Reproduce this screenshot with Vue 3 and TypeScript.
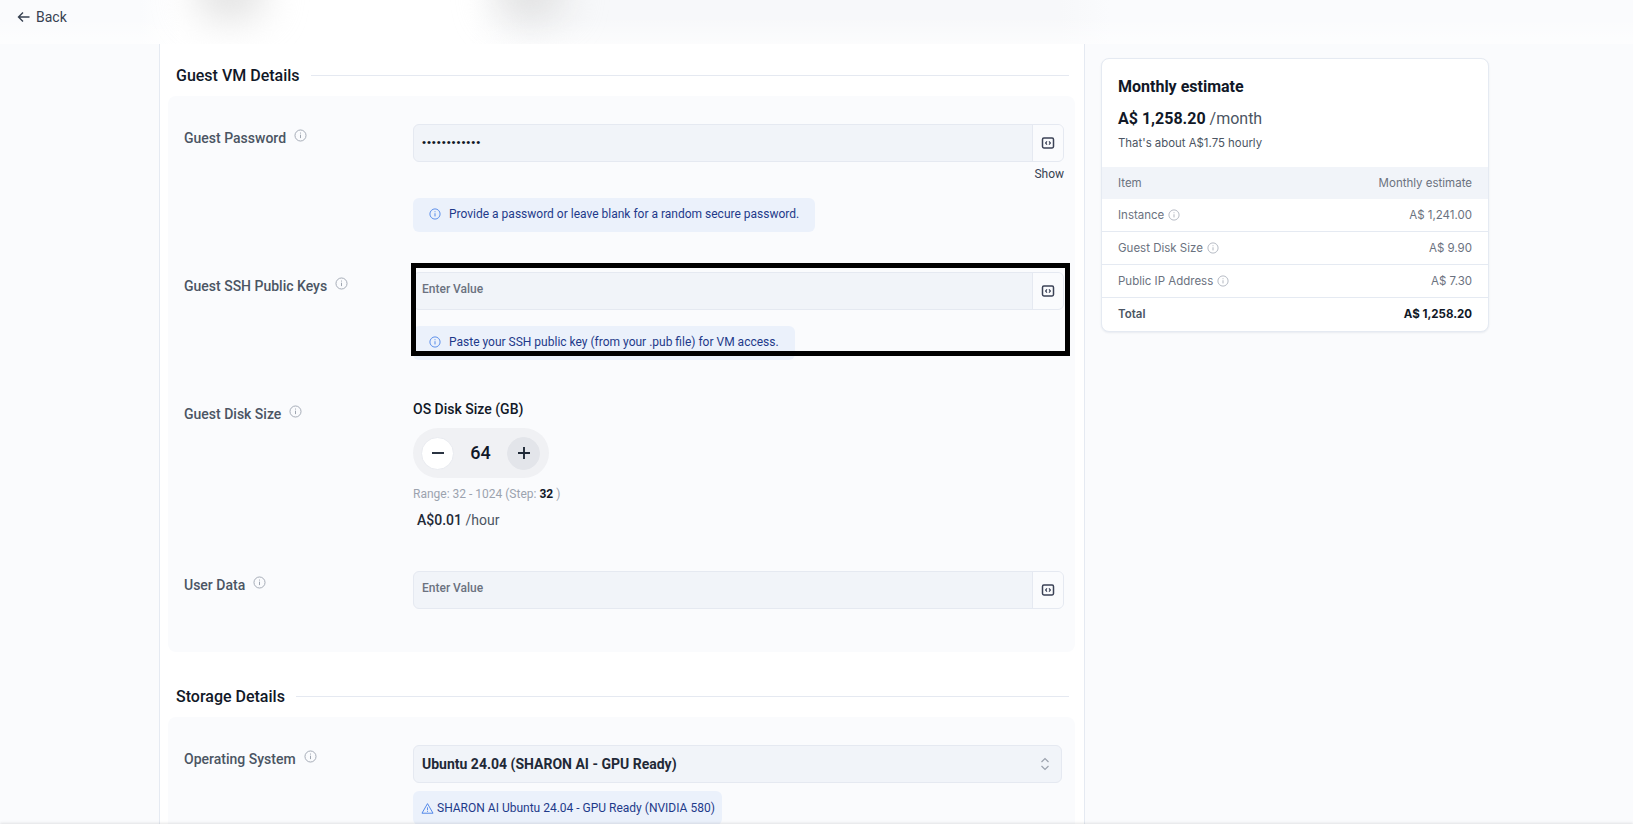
<script setup lang="ts">
const rows = [
  { label: "Instance", amount: "A$ 1,241.00" },
  { label: "Guest Disk Size", amount: "A$ 9.90" },
  { label: "Public IP Address", amount: "A$ 7.30" },
];
</script>

<template>
  <div class="page">
    <header class="topbar">
      <span class="blob blob-a"></span>
      <span class="blob blob-b"></span>
      <a class="back">
        <svg class="back-arrow" viewBox="0 0 16 16" width="16" height="16">
          <path d="M13.5 8H2.8M7 3.5 2.5 8 7 12.5" fill="none" stroke="currentColor" stroke-width="1.4" />
        </svg>
        Back
      </a>
    </header>

    <main class="main">
      <section class="panel">
        <div class="heading">
          <h2>Guest VM Details</h2>
          <span class="rule"></span>
        </div>
        <div class="group group-guest">
          <div class="row row-password">
            <div class="label">
              Guest Password
              <svg class="info-icon" viewBox="0 0 16 16" width="13" height="13">
                <circle cx="8" cy="8" r="6.8" fill="none" stroke="currentColor" stroke-width="1.1" />
                <path d="M8 7v4.2M8 4.4v1.2" stroke="currentColor" stroke-width="1.2" />
              </svg>
            </div>
            <div class="field">
              <div class="input">
                <span class="dots">••••••••••••</span>
                <span class="addon">
                  <svg viewBox="0 0 14 14" width="14" height="14">
                    <rect x="1.5" y="2" width="11" height="10" rx="1.4" fill="none" stroke="#3b4256" stroke-width="1.5" />
                    <path d="M6 5.4 4.6 7 6 8.6M8 5.4 9.4 7 8 8.6" fill="none" stroke="#3b4256" stroke-width="1.2" />
                  </svg>
                </span>
              </div>
              <div class="show">Show</div>
              <div class="note note-first">
                <svg class="note-icon" viewBox="0 0 16 16" width="12" height="12">
                  <circle cx="8" cy="8" r="6.8" fill="none" stroke="currentColor" stroke-width="1.2" />
                  <path d="M8 7v4.2M8 4.4v1.2" stroke="currentColor" stroke-width="1.3" />
                </svg>
                Provide a password or leave blank for a random secure password.
              </div>
            </div>
          </div>

          <div class="row row-ssh">
            <div class="label">
              Guest SSH Public Keys
              <svg class="info-icon" viewBox="0 0 16 16" width="13" height="13">
                <circle cx="8" cy="8" r="6.8" fill="none" stroke="currentColor" stroke-width="1.1" />
                <path d="M8 7v4.2M8 4.4v1.2" stroke="currentColor" stroke-width="1.2" />
              </svg>
            </div>
            <div class="field">
              <div class="input">
                <span class="placeholder">Enter Value</span>
                <span class="addon">
                  <svg viewBox="0 0 14 14" width="14" height="14">
                    <rect x="1.5" y="2" width="11" height="10" rx="1.4" fill="none" stroke="#3b4256" stroke-width="1.5" />
                    <path d="M6 5.4 4.6 7 6 8.6M8 5.4 9.4 7 8 8.6" fill="none" stroke="#3b4256" stroke-width="1.2" />
                  </svg>
                </span>
              </div>
              <div class="note note-ssh">
                <svg class="note-icon" viewBox="0 0 16 16" width="12" height="12">
                  <circle cx="8" cy="8" r="6.8" fill="none" stroke="currentColor" stroke-width="1.2" />
                  <path d="M8 7v4.2M8 4.4v1.2" stroke="currentColor" stroke-width="1.3" />
                </svg>
                Paste your SSH public key (from your .pub file) for VM access.
              </div>
              <div class="highlight"></div>
            </div>
          </div>

          <div class="row row-disk">
            <div class="label">
              Guest Disk Size
              <svg class="info-icon" viewBox="0 0 16 16" width="13" height="13">
                <circle cx="8" cy="8" r="6.8" fill="none" stroke="currentColor" stroke-width="1.1" />
                <path d="M8 7v4.2M8 4.4v1.2" stroke="currentColor" stroke-width="1.2" />
              </svg>
            </div>
            <div class="field">
              <div class="disk-title">OS Disk Size (GB)</div>
              <div class="stepper">
                <button class="step step-minus">
                  <svg viewBox="0 0 14 14" width="14" height="14"><path d="M1 7h12" stroke="currentColor" stroke-width="1.9" /></svg>
                </button>
                <span class="step-value">64</span>
                <button class="step step-plus">
                  <svg viewBox="0 0 14 14" width="14" height="14"><path d="M1 7h12M7 1v12" stroke="currentColor" stroke-width="1.9" /></svg>
                </button>
              </div>
              <div class="range">Range: 32 - 1024 (Step: <b>32</b> )</div>
              <div class="hour"><b>A$0.01</b> /hour</div>
            </div>
          </div>

          <div class="row row-user">
            <div class="label">
              User Data
              <svg class="info-icon" viewBox="0 0 16 16" width="13" height="13">
                <circle cx="8" cy="8" r="6.8" fill="none" stroke="currentColor" stroke-width="1.1" />
                <path d="M8 7v4.2M8 4.4v1.2" stroke="currentColor" stroke-width="1.2" />
              </svg>
            </div>
            <div class="field">
              <div class="input">
                <span class="placeholder">Enter Value</span>
                <span class="addon">
                  <svg viewBox="0 0 14 14" width="14" height="14">
                    <rect x="1.5" y="2" width="11" height="10" rx="1.4" fill="none" stroke="#3b4256" stroke-width="1.5" />
                    <path d="M6 5.4 4.6 7 6 8.6M8 5.4 9.4 7 8 8.6" fill="none" stroke="#3b4256" stroke-width="1.2" />
                  </svg>
                </span>
              </div>
            </div>
          </div>
        </div>

        <div class="heading heading-storage">
          <h2>Storage Details</h2>
          <span class="rule"></span>
        </div>
        <div class="group group-storage">
          <div class="row">
            <div class="label">
              Operating System
              <svg class="info-icon" viewBox="0 0 16 16" width="13" height="13">
                <circle cx="8" cy="8" r="6.8" fill="none" stroke="currentColor" stroke-width="1.1" />
                <path d="M8 7v4.2M8 4.4v1.2" stroke="currentColor" stroke-width="1.2" />
              </svg>
            </div>
            <div class="field field-os">
              <div class="select">
                <span>Ubuntu 24.04 (SHARON AI - GPU Ready)</span>
                <svg viewBox="0 0 12 16" width="12" height="16">
                  <path d="M2.5 6 6 2.5 9.5 6M2.5 10 6 13.5 9.5 10" fill="none" stroke="#9ca3af" stroke-width="1.2" />
                </svg>
              </div>
              <div class="note note-warn">
                <svg class="note-icon warn-icon" viewBox="0 0 16 16" width="13" height="13">
                  <path d="M8 2 14.8 13.8H1.2Z" fill="none" stroke="currentColor" stroke-width="1.2" stroke-linejoin="round" />
                  <path d="M8 6.5v3.7M8 11.2v1.1" stroke="currentColor" stroke-width="1.1" />
                </svg>
                SHARON AI Ubuntu 24.04 - GPU Ready (NVIDIA 580)
              </div>
            </div>
          </div>
        </div>
      </section>

      <aside class="side">
        <div class="card">
          <div class="card-head">
            <h3>Monthly estimate</h3>
            <div class="price"><b>A$ 1,258.20</b> <span>/month</span></div>
            <div class="hourly">That's about A$1.75 hourly</div>
          </div>
          <div class="line line-head">
            <span>Item</span>
            <span>Monthly estimate</span>
          </div>
          <div v-for="r in rows" :key="r.label" class="line">
            <span class="line-label">
              {{ r.label }}
              <svg viewBox="0 0 16 16" width="12" height="12">
                <circle cx="8" cy="8" r="6.8" fill="none" stroke="currentColor" stroke-width="1.1" />
                <path d="M8 7v4.2M8 4.4v1.2" stroke="currentColor" stroke-width="1.2" />
              </svg>
            </span>
            <span>{{ r.amount }}</span>
          </div>
          <div class="line line-total">
            <span>Total</span>
            <span class="total-amount">A$ 1,258.20</span>
          </div>
        </div>
      </aside>
    </main>
    <footer class="footer"></footer>
  </div>
</template>

<style scoped>
.page {
  height: 829px;
  overflow: hidden;
  display: flex;
  flex-direction: column;
  background: #fafbfd;
  font-family: Inter, "Liberation Sans", sans-serif;
  color: #111827;
}

.topbar {
  position: relative;
  height: 44px;
  flex: none;
  overflow: hidden;
  display: flex;
  align-items: flex-start;
  padding: 9px 0 0 16px;
  box-sizing: border-box;
  background:
    linear-gradient(180deg, rgba(255, 255, 255, 0) 40%, rgba(255, 255, 255, 0.6) 100%),
    linear-gradient(90deg, #fafbfd 0, #fafbfd 140px, #fff 180px, #fff 470px, #f7f8fa 530px, #f7f8fa 1060px, #fafbfd 1110px);
}

.blob {
  position: absolute;
  top: -30px;
  height: 48px;
  border-radius: 50%;
  background: #dcdcdc;
  filter: blur(20px);
}

.blob-a {
  left: 195px;
  width: 70px;
}

.blob-b {
  left: 495px;
  width: 70px;
}

.back {
  position: relative;
  display: flex;
  align-items: center;
  gap: 4px;
  font-family: Roboto, sans-serif;
  font-size: 14px;
  line-height: 16px;
  color: #374151;
}

.main {
  flex: 1;
  min-height: 0;
  display: flex;
  align-items: flex-start;
  padding-left: 159px;
}

.panel {
  width: 926px;
  height: 780px;
  overflow: hidden;
  flex: none;
  box-sizing: border-box;
  background: #fff;
  border-left: 1px solid #e5eaf2;
  border-right: 1px solid #e5eaf2;
  padding: 0 9px 0 8px;
}

.heading {
  display: flex;
  align-items: center;
  gap: 11px;
  height: 24px;
  margin: 19px 0 9px;
  padding-left: 8px;
  padding-right: 6px;
}

.heading h2 {
  margin: 0;
  font-family: Roboto, sans-serif;
  font-size: 16px;
  font-weight: 500;
  color: #111827;
  white-space: nowrap;
}

.rule {
  flex: 1;
  height: 1px;
  background: #e5e9f1;
}

.heading-storage {
  margin-top: 32px;
}

.group {
  background: #fafbfd;
  border-radius: 8px;
  padding: 0 11px 0 16px;
}

.group-guest {
  height: 556px;
}

.group-storage {
  height: 200px;
  padding-top: 28px;
}

.row {
  display: flex;
}

.row-password {
  padding-top: 28px;
}

.row-ssh {
  padding-top: 40px;
}

.row-disk {
  padding-top: 40px;
}

.row-user {
  padding-top: 42px;
}

.label {
  width: 229px;
  flex: none;
  display: flex;
  align-items: flex-start;
  gap: 8px;
  padding-top: 5px;
  font-family: Roboto, sans-serif;
  font-size: 14px;
  line-height: 18px;
  font-weight: 500;
  color: #4b5563;
  white-space: nowrap;
}

.info-icon {
  color: #9ca3af;
}

.field {
  position: relative;
  flex: 1;
  min-width: 0;
}

.input {
  display: flex;
  height: 38px;
  box-sizing: border-box;
  border: 1px solid #e5e9f1;
  border-radius: 6px;
  background: #f1f4f9;
  align-items: center;
  overflow: hidden;
}

.dots {
  flex: 1;
  padding: 0 0 2px 8px;
  font-family: "Liberation Sans", sans-serif;
  font-size: 11.5px;
  letter-spacing: 0.9px;
  color: #111827;
}

.placeholder {
  flex: 1;
  padding: 0 0 4px 8px;
  font-family: Roboto, sans-serif;
  font-size: 12px;
  font-weight: 500;
  color: #6b7280;
}

.addon {
  width: 30px;
  height: 100%;
  flex: none;
  display: flex;
  align-items: center;
  justify-content: center;
  background: #fafbfd;
  border-left: 1px solid #e5e9f1;
}

.show {
  margin-top: 4px;
  text-align: right;
  font-family: Roboto, sans-serif;
  font-size: 12px;
  line-height: 16px;
  color: #374151;
}

.note {
  display: flex;
  align-items: center;
  width: fit-content;
  height: 34px;
  box-sizing: border-box;
  padding: 0 16px 2px;
  gap: 8px;
  background: #ebf1fb;
  border-radius: 6px;
  font-family: Roboto, sans-serif;
  font-size: 12px;
  color: #1e3a8a;
  white-space: nowrap;
}

.note-icon {
  color: #4f86e8;
  flex: none;
}

.note-first {
  margin-top: 16px;
}

.note-ssh {
  margin-top: 16px;
}

.highlight {
  position: absolute;
  left: -2px;
  top: -9px;
  right: -6px;
  height: 93px;
  box-sizing: border-box;
  border: 5px solid #000;
}

.disk-title {
  font-family: Roboto, sans-serif;
  font-size: 14px;
  font-weight: 500;
  line-height: 18px;
  color: #111827;
}

.stepper {
  margin-top: 10px;
  display: flex;
  align-items: center;
  justify-content: space-between;
  width: 136px;
  height: 50px;
  box-sizing: border-box;
  padding: 0 9px 0 8px;
  border-radius: 25px;
  background: #f0f1f4;
}

.step {
  width: 33px;
  height: 33px;
  padding: 0;
  display: flex;
  align-items: center;
  justify-content: center;
  border: 1px solid #e9ebf0;
  border-radius: 50%;
  background: #fff;
  color: #1f2937;
}

.step-plus {
  background: #e3e5ea;
  border-color: #e3e5ea;
}

.step-value {
  padding-bottom: 2px;
  font-family: Roboto, sans-serif;
  font-size: 18px;
  font-weight: 500;
  color: #111827;
}

.range {
  margin-top: 8px;
  font-family: Roboto, sans-serif;
  font-size: 12px;
  line-height: 16px;
  color: #9ca3af;
}

.range b {
  color: #111827;
}

.hour {
  margin-top: 9px;
  padding-left: 4px;
  font-family: Roboto, sans-serif;
  font-size: 14px;
  line-height: 18px;
  color: #4b5563;
}

.hour b {
  font-weight: 500;
  color: #1f2937;
}

.field-os {
  padding-right: 2px;
}

.select {
  display: flex;
  align-items: center;
  justify-content: space-between;
  height: 38px;
  box-sizing: border-box;
  padding: 0 10px 0 8px;
  border: 1px solid #e5e9f1;
  border-radius: 6px;
  background: #f1f4f9;
  font-family: Roboto, sans-serif;
  font-size: 14px;
  font-weight: 700;
  color: #1f2937;
}

.note-warn {
  margin-top: 8px;
  padding: 0 7px 0 8px;
  gap: 3px;
}

.side {
  padding: 14px 0 0 16px;
}

.card {
  width: 388px;
  box-sizing: border-box;
  background: #fff;
  border: 1px solid #e5eaf2;
  border-radius: 8px;
  overflow: hidden;
  box-shadow: 0 1px 2px rgba(30, 50, 90, 0.08);
}

.card-head {
  padding: 18px 16px 0;
  height: 108px;
  box-sizing: border-box;
}

.card-head h3 {
  margin: 0;
  font-family: Roboto, sans-serif;
  font-size: 16px;
  line-height: 20px;
  font-weight: 700;
  color: #111827;
}

.price {
  margin-top: 11px;
  font-family: Roboto, sans-serif;
  font-size: 16px;
  line-height: 22px;
  color: #4b5563;
}

.price b {
  color: #111827;
}

.hourly {
  margin-top: 5px;
  font-size: 11.4px;
  line-height: 16px;
  color: #4b5563;
}

.line {
  display: flex;
  justify-content: space-between;
  align-items: center;
  height: 33px;
  box-sizing: border-box;
  padding: 0 16px 1px;
  border-bottom: 1px solid #e5eaf2;
  font-size: 11.5px;
  color: #6b7280;
}

.line-head {
  height: 32px;
  background: #f1f4f9;
  border-bottom: none;
}

.line-label {
  display: flex;
  align-items: center;
  gap: 4px;
}

.line-label svg {
  color: #a8aeb8;
}

.line-total {
  border-bottom: none;
  font-weight: 600;
  color: #4b5563;
}

.total-amount {
  font-weight: 700;
  color: #111827;
}

.footer {
  height: 5px;
  flex: none;
  background: #fff;
  box-shadow: 0 -1px 3px rgba(0, 0, 0, 0.1);
  position: relative;
}
</style>

<style>
html,
body {
  margin: 0;
  background: #fafbfd;
}
</style>
